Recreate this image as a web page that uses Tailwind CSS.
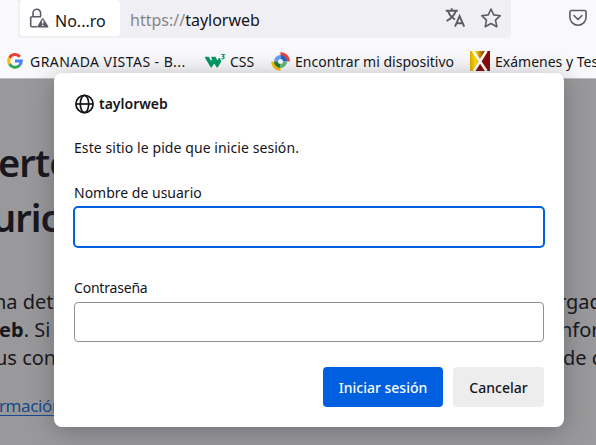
<!DOCTYPE html>
<html lang="es">
<head>
<meta charset="utf-8">
<title>taylorweb</title>
<script src="https://cdn.jsdelivr.net/npm/@tailwindcss/browser@4"></script>
</head>
<body class="bg-[#f9f9fb]">
<div class="relative flex h-[445px] w-[596px] flex-col overflow-hidden whitespace-nowrap bg-[#f9f9fb] font-['Noto_Sans',sans-serif] text-[#15141a]">
  <header class="flex h-[38px] shrink-0 pl-[18px]">
    <div class="flex w-[493px] items-start rounded-b-[4px] bg-[#f0f0f4] pl-[2px]">
      <div class="flex h-9 w-[100px] shrink-0 items-center rounded-[4px] bg-white pl-[9px]">
        <svg class="h-[22px] w-[21px] shrink-0" viewBox="0 0 21 22" fill="none" stroke="#5b5b66" stroke-width="1.600">
          <path d="M4 9.500V6a3.800 3.800 0 0 1 7.600 0v3.500M8 19.700H3a1.300 1.300 0 0 1-1.300-1.300v-7.300A1.300 1.300 0 0 1 3 9.800h9"/>
          <path d="M13.700 12 18.600 19.800H8.900Z" fill="#5b5b66" stroke-linejoin="round"/>
          <path d="M13.700 13.300v3.300M13.700 17.700v1.400" stroke="#fff"/>
        </svg>
        <span class="ml-[5px] mt-[5px] text-[16px]">No...ro</span>
      </div>
      <span class="ml-[10px] mt-[8px] text-[16px] leading-6"><span class="text-[#85858c]">https://</span>taylorweb</span>
      <svg class="ml-auto mt-[7px] h-[21px] w-[21px]" viewBox="0 0 21 21" fill="none" stroke="#5b5b66" stroke-width="1.900">
        <path d="M.8 3.700h12M6.800 1.200v2.500M3 3.700c1.200 4.400 4 7 7 8.800M10.800 3.700C9.600 8.500 6 11.500 1.500 14M10 19.700l4.600-10.500 4.600 10.500M11.600 16.300h6"/>
      </svg>
      <svg class="ml-[14px] mr-[9px] mt-[7px] h-[22px] w-[22px]" viewBox="0 0 22 22" fill="none" stroke="#5b5b66" stroke-width="1.600" stroke-linejoin="round">
        <path d="M11 2 13.700 7.900 20.300 8.700 15.500 13.200 16.800 19.700 11 16.500 5.200 19.700 6.500 13.200 1.700 8.700 8.300 7.900Z"/>
      </svg>
    </div>
    <svg class="ml-[57px] mt-[9px] h-[18px] w-[20px]" viewBox="0 0 20 18" fill="none" stroke="#5b5b66" stroke-width="1.600" stroke-linecap="round" stroke-linejoin="round">
      <path d="M3.500 1.500h13a1.600 1.600 0 0 1 1.600 1.600v5a8.100 8.100 0 0 1-16.200 0v-5a1.600 1.600 0 0 1 1.600-1.600ZM6 6.500l4 4 4-4"/>
    </svg>
  </header>
  <nav class="flex h-[40px] shrink-0 items-center pl-[7px] pt-[6px] text-[14px]">
    <svg class="h-4 w-4 shrink-0" viewBox="0 0 16 16" fill="none" stroke-width="3">
      <path d="M12.900 3.700A6.300 6.300 0 0 0 2.500 5" stroke="#ea4335"/>
      <path d="M2.500 5a6.300 6.300 0 0 0 0 6" stroke="#fbbc05"/>
      <path d="M2.500 11a6.300 6.300 0 0 0 9.800 1.600" stroke="#34a853"/>
      <path d="M8 8h6.300a6.300 6.300 0 0 1-2 4.600" stroke="#4285f4"/>
    </svg>
    <span class="ml-[7px] w-[156px] shrink-0 tracking-[0.45px]">GRANADA VISTAS - B...</span>
    <svg class="ml-[18px] h-[16px] w-[22px] shrink-0" viewBox="0 0 22 16">
      <path d="M1.500 4.500H4.500L7.200 9.500 8.700 6 7.800 4.500h3.400L13.500 9l1.700-3.500 1.500 3-3.500 5.500L10.200 9.500l-3 4.500Z" fill="#059862" stroke="#059862" stroke-width="1.300" stroke-linejoin="round"/>
      <path d="M17.300 1.500h3l-1.500 2c2.500.4 1.300 3-1.500 2" fill="none" stroke="#059862" stroke-width="1.200"/>
    </svg>
    <span class="ml-[4px] w-[26px] shrink-0">CSS</span>
    <svg class="ml-[15px] h-[19px] w-[19px] shrink-0" viewBox="0 0 19 19" fill="none">
      <path d="M9.500 1.800a7.700 7.700 0 0 1 7.700 7.700" stroke="#ea4335" stroke-width="3.400"/>
      <path d="M1.800 9.500a7.700 7.700 0 0 0 7.700 7.700" stroke="#fbbc04" stroke-width="3.400"/>
      <path d="M9.500 5A4.500 4.500 0 0 0 5 9.500" stroke="#669df6" stroke-width="4"/>
      <path d="M9.500 5A4.500 4.500 0 0 1 14 9.500" stroke="#1967d2" stroke-width="4"/>
      <path d="M5 9.500A4.500 4.500 0 0 0 9.500 14" stroke="#188038" stroke-width="4"/>
      <path d="M14 9.500A4.500 4.500 0 0 1 9.500 14" stroke="#5bb974" stroke-width="4"/>
    </svg>
    <span class="ml-[5px] w-[160px] shrink-0">Encontrar mi dispositivo</span>
    <svg class="ml-[15px] h-5 w-5 shrink-0" viewBox="0 0 20 20">
      <defs><linearGradient id="gold"><stop stop-color="#e0a800"/><stop offset=".35" stop-color="#ffe000"/><stop offset=".8" stop-color="#a05008"/></linearGradient></defs>
      <path d="M0 0h20v20H0Z" fill="#850b0b"/><path d="M0 0h16L4 20H0Z" fill="url(#gold)"/>
      <path d="M3 0 16.500 20M16.500 0 4 20" stroke="#fff" stroke-width="2.600"/>
    </svg>
    <span class="ml-[5px] shrink-0">Exámenes y Tes</span>
  </nav>
  <main class="flex-1 overflow-hidden border-t border-[#bdbdc0] bg-[#99999b] text-[#18171d]">
    <h1 class="pt-[56px] text-[38px] font-semibold leading-[55px] tracking-[-1px]"><span class="-ml-[2px] block">erto</span><span class="-ml-[8px] block">uric</span></h1>
    <div class="mt-[43px] flex justify-between text-[20px] leading-7">
      <p><span class="-ml-[6px] block">na det</span><span class="-ml-[18px] block"><b>web</b>. Si</span><span class="-ml-[5px] block">us con</span></p>
      <p class="w-[50px]"><span class="ml-[12px] block">rgad</span><span class="ml-[14px] block">nfor</span><span class="ml-[17px] block">de c</span></p>
    </div>
    <a class="-ml-px mt-[20px] block text-[17px] leading-7 tracking-[-0.4px] text-[#144a8e] underline underline-offset-[3px]">rmación</a>
  </main>
  <section class="absolute left-[54px] top-[73px] flex h-[354px] w-[510px] flex-col rounded-[8px] bg-white px-5 pt-5 text-[14px] shadow-[0_4px_24px_rgba(58,57,68,0.4)]">
    <div class="flex h-[21px] items-center font-semibold">
      <svg class="mr-[5px] h-5 w-5" viewBox="0 0 20 20" fill="none" stroke="#15141a" stroke-width="1.700"><circle cx="10.500" cy="10" r="8.600"/><ellipse cx="10.500" cy="10" rx="4.200" ry="8.600"/><path d="M2 10h17"/></svg>
      <span>taylorweb</span>
    </div>
    <p class="mt-[23px] leading-[21px] tracking-[0.08px]">Este sitio le pide que inicie sesión.</p>
    <label class="mt-[24px] leading-[21px]">Nombre de usuario</label>
    <div class="-mx-px mt-[3px] h-[42px] shrink-0 rounded-[5px] border-2 border-[#0060df]"></div>
    <label class="mt-[29px] leading-[21px] tracking-[-0.2px]">Contraseña</label>
    <div class="mt-[4px] h-10 shrink-0 rounded-[4px] border border-[#8f8f94]"></div>
    <div class="mt-[25px] flex justify-end gap-[10px] font-medium">
      <div class="flex h-10 w-[120px] items-center justify-center rounded-[4px] bg-[#0060df] text-[#fbfbfe]">Iniciar sesión</div>
      <div class="flex h-10 w-[91px] items-center justify-center rounded-[4px] bg-[#ededee]">Cancelar</div>
    </div>
  </section>
</div>
</body>
</html>
